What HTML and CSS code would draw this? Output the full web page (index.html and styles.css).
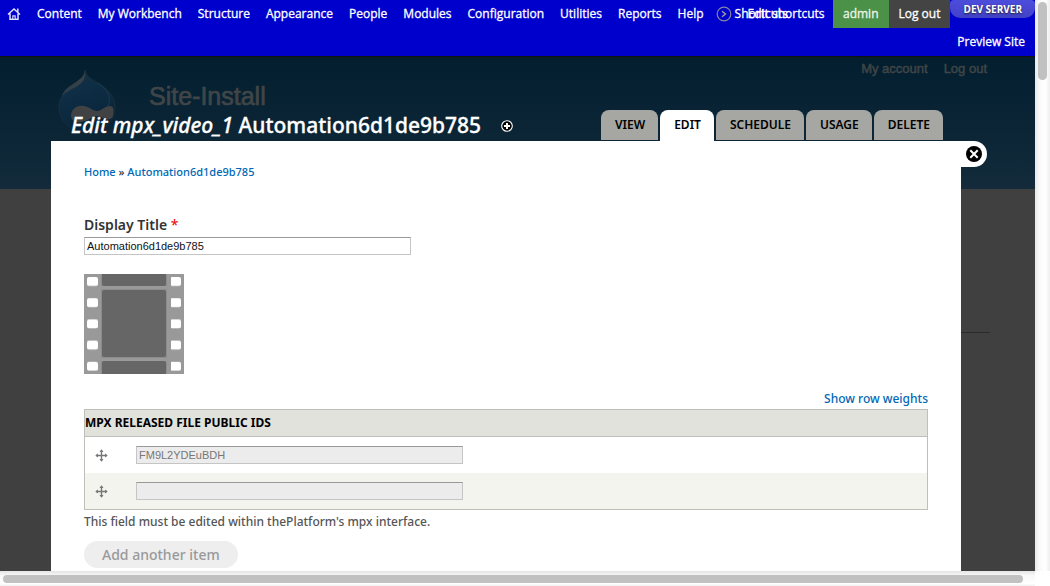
FILE: index.html
```html
<!DOCTYPE html>
<html lang="en">
<head>
<meta charset="utf-8">
<title>Edit mpx_video_1 Automation6d1de9b785 | Site-Install</title>
<link rel="stylesheet" href="styles.css">
</head>
<body>
<div class="screen">
  <nav class="toolbar" aria-label="Administration">
    <ul class="menu">
      <li><a href="#" class="home" aria-label="Home"><svg width="14" height="14" viewBox="0 0 14 14"><path d="M1 7.5 7 2l6 5.5M3 6.4v5.9h8V6.4M10.8 1.5v3.5" fill="none" stroke="#dfe1f7" stroke-width="1.5"/><path d="M5.3 8.3h3.4V13H5.3z" fill="#dfe1f7"/><path d="M6.4 9.6h1.2v2.2H6.4z" fill="#0000cd"/></svg></a></li>
      <li><a href="#">Content</a></li>
      <li><a href="#">My Workbench</a></li>
      <li><a href="#">Structure</a></li>
      <li><a href="#">Appearance</a></li>
      <li><a href="#">People</a></li>
      <li><a href="#">Modules</a></li>
      <li><a href="#">Configuration</a></li>
      <li><a href="#">Utilities</a></li>
      <li><a href="#">Reports</a></li>
      <li><a href="#">Help</a></li>
    </ul>
    <div class="shortcuts">
      <svg width="16" height="16" viewBox="0 0 16 16"><circle cx="8" cy="8" r="6.8" fill="none" stroke="#8585a5" stroke-width="1.2"/><path d="M6 5.3 9.5 8 6 10.7" fill="none" stroke="#a0a092" stroke-width="1.4"/></svg>
      <a href="#">Shortcuts</a>
      <a href="#" class="edit-shortcuts">Edit shortcuts</a>
    </div>
    <div class="account">
      <a href="#" class="user">admin</a>
      <a href="#" class="logout">Log out</a>
      <span class="environment">DEV SERVER</span>
    </div>
    <a href="#" class="preview">Preview Site</a>
  </nav>

  <div class="viewport">
    <div class="backdrop">
      <header class="site-header">
        <svg class="logo" width="60" height="64" viewBox="0 0 60 64">
          <defs>
            <linearGradient id="drop" x1="0" y1="0" x2="0.4" y2="1"><stop offset="0" stop-color="#1d3544"/><stop offset=".4" stop-color="#0e2e45"/><stop offset="1" stop-color="#08243a"/></linearGradient>
            <linearGradient id="shine" x1="1" y1="0" x2="0" y2="1"><stop offset="0" stop-color="#3c4348"/><stop offset="1" stop-color="#2c3d48"/></linearGradient>
          </defs>
          <path d="M27 1c2 9 8 9 16 15 8 6 14 12 14 22 0 15-12 25-28 25S1 52 1 38C1 27 9 20 17 15c6-4 9-6 10-14z" fill="url(#drop)" stroke="#1b2e3b"/>
          <path d="M4 27c2-7 8-10 14-14 4-3 8-5 9-11 1 8-3 12-9 16-6 3-10 5-14 9z" fill="url(#shine)"/>
          <path d="M39 14c10 5 15 14 11 23" fill="none" stroke="#1b3b50"/>
          <path d="M13 47c0-7 6-11 13-10 6 1 9 5 13 5s8-5 13-5c4 0 4 5 3 10-2 5-8 4-12 1-4-2-6-1-10 1-7 5-19 7-20-2z" fill="#404244"/>
        </svg>
        <span class="site-name">Site-Install</span>
        <div class="site-links"><a href="#">My account</a><a href="#">Log out</a></div>
      </header>
      <div class="site-body"><hr></div>
    </div>

    <div class="overlay">
      <header class="overlay-head">
        <h1><em>Edit mpx_video_1</em> Automation6d1de9b785</h1>
        <button class="add" aria-label="Add to shortcuts"><svg width="12" height="12" viewBox="0 0 12 12"><circle cx="6" cy="6" r="5.3" fill="#000" stroke="#fff" stroke-width="1.1"/><path d="M6 3v6M3 6h6" stroke="#fff" stroke-width="2"/></svg></button>
        <nav class="tabs" aria-label="Tabs">
          <a href="#">VIEW</a><a href="#" class="active">EDIT</a><a href="#">SCHEDULE</a><a href="#">USAGE</a><a href="#">DELETE</a>
        </nav>
      </header>
      <div class="overlay-main">
        <main class="panel">
          <div class="crumbs"><a href="#">Home</a> » <a href="#">Automation6d1de9b785</a></div>
          <label class="title-label" for="display-title">Display Title <span>*</span></label>
          <input class="text" id="display-title" value="Automation6d1de9b785">
          <svg class="film" width="100" height="100" viewBox="0 0 100 100">
            <defs><pattern id="holes" width="83" height="21.2" patternUnits="userSpaceOnUse" x="3" y="3"><rect width="11" height="9" rx="2" fill="#fff"/></pattern></defs>
            <path fill="#999" d="M0 0h100v100H0z"/>
            <path fill="#8c8c8c" d="M17 0h66v100H17z"/>
            <path fill="#999" d="M17 12h66v3H17zM17 84h66v3H17z"/>
            <path fill="#666" d="M18 0h64v10q0 2-2 2H20q-2 0-2-2zM20 16h60q2 0 2 2v63q0 2-2 2H20q-2 0-2-2V18q0-2 2-2zM20 87h60q2 0 2 2v11H18V89q0-2 2-2z"/>
            <path fill="url(#holes)" d="M3 3h94v94H3z"/>
          </svg>
          <a href="#" class="weights">Show row weights</a>
          <table>
            <thead><tr><th colspan="2">MPX RELEASED FILE PUBLIC IDS</th></tr></thead>
            <tbody>
              <tr>
                <td class="handle"><svg width="13" height="13" viewBox="0 0 13 13"><path d="M6.5 1v11M1 6.5h11" stroke="#777" stroke-width="1.4"/><path d="M4.5 3 6.5.3 8.5 3zM4.5 10l2 2.7 2-2.7zM3 4.5.3 6.5 3 8.5zM10 4.5l2.7 2-2.7 2z" fill="#777"/></svg></td>
                <td><input class="text" aria-label="Public ID 1" value="FM9L2YDEuBDH" disabled></td>
              </tr>
              <tr>
                <td class="handle"><svg width="13" height="13" viewBox="0 0 13 13"><path d="M6.5 1v11M1 6.5h11" stroke="#777" stroke-width="1.4"/><path d="M4.5 3 6.5.3 8.5 3zM4.5 10l2 2.7 2-2.7zM3 4.5.3 6.5 3 8.5zM10 4.5l2.7 2-2.7 2z" fill="#777"/></svg></td>
                <td><input class="text" aria-label="Public ID 2" disabled></td>
              </tr>
            </tbody>
          </table>
          <p class="hint">This field must be edited within thePlatform's mpx interface.</p>
          <button class="add-item" disabled>Add another item</button>
        </main>
        <button class="close" aria-label="Close overlay"><svg width="16" height="16" viewBox="0 0 16 16"><circle cx="8" cy="8" r="8" fill="#000"/><path d="m4.3 4.3 7.4 7.4m0-7.4-7.4 7.4" stroke="#fff" stroke-width="2"/></svg></button>
      </div>
    </div>
  </div>
</div>
<div class="scroll-v"><div class="thumb"></div></div>
<div class="scroll-h"><div class="thumb"></div></div>
</body>
</html>
```
FILE: styles.css
```css
* { box-sizing: border-box; }
body {
  margin: 0;
  height: 100vh;
  display: grid;
  grid-template: minmax(0, 1fr) 15px / minmax(0, 1fr) 15px;
  overflow: hidden;
  background: #fff;
  font: 500 12px/18px "Noto Sans", "Open Sans", sans-serif;
  color: #333;
}
a { color: #0068b5; text-decoration: none; }
button { border: 0; padding: 0; background: none; }
svg { display: block; }

.screen { display: flex; flex-direction: column; min-height: 0; overflow: hidden; }

.toolbar {
  display: flex;
  flex-wrap: wrap;
  flex: none;
  background: #0000cd;
  border-bottom: 1px solid #111;
  font: 12px/28px "Open Sans", sans-serif;
  -webkit-text-stroke: 0.3px currentColor;
}
.toolbar a { color: #fff; }
.menu { display: flex; margin: 0; padding: 0; list-style: none; }
.menu a { display: block; padding: 0 8px; }
.menu .home { padding: 7px 8px 7px 7px; }
.shortcuts { position: relative; display: flex; align-items: center; gap: 3px; margin-left: 4px; }
.edit-shortcuts { position: absolute; left: 32px; top: 0; white-space: nowrap; }
.account { display: flex; margin-left: auto; }
.account a { padding: 0 10px; }
.account .user { background: #4b9148; color: #eef5ee; }
.account .logout { background: #444; }
.environment {
  height: 18px;
  padding: 0 13px;
  border-radius: 4px 4px 10px 10px;
  background: linear-gradient(#4d4ddc, #4141c8);
  color: #fff;
  font: bold 10px/18px "Open Sans", sans-serif;
  text-shadow: 0 1px 2px #222;
  -webkit-text-stroke: 0;
}
.preview { margin-left: auto; padding-right: 10px; }

.viewport { flex: 1; min-height: 0; display: grid; grid-template: minmax(0, 1fr) / minmax(0, 1fr); }
.backdrop, .overlay { grid-area: 1 / 1; min-height: 0; }
.backdrop { background: #404040; }
.site-header {
  height: 132px;
  display: flex;
  align-items: flex-start;
  padding: 0 48px 0 58px;
  background: linear-gradient(#021e2f, #132b3b);
  color: #404547;
  font-family: "Liberation Sans", sans-serif;
}
.logo { margin-top: 12px; }
.site-name { margin: 23px 0 0 31px; font-size: 25px; font-weight: 400; line-height: 32px; -webkit-text-stroke: 0.7px currentColor; }
.site-links { display: flex; gap: 16px; margin-left: auto; padding-top: 3px; font-size: 13px; font-weight: 400; }
.site-links a { color: #404547; -webkit-text-stroke: 0.5px currentColor; }
.site-body { padding: 143px 45px 0 60px; }
.site-body hr { margin: 0; border: 0; border-top: 1px solid #2b2b2b; }

.overlay { display: flex; flex-direction: column; padding: 53px 48px 0 51px; }
.overlay-head { display: flex; align-items: flex-end; flex: none; height: 31px; padding: 0 44px 0 20px; }
.overlay h1 {
  margin: 0;
  font-size: 21px;
  font-weight: 500;
  line-height: 32px;
  color: #fff;
  white-space: nowrap;
  -webkit-text-stroke: 0.3px currentColor;
}
.add { align-self: center; margin-left: 20px; }
.tabs { display: flex; align-items: flex-start; gap: 2px; margin-left: auto; height: 31px; }
.tabs a {
  padding: 0 13px 0 14px;
  border-radius: 8px 8px 0 0;
  background: #a6a7a2;
  color: #000;
  font-size: 12px;
  font-weight: 600;
  line-height: 30px;
}
.tabs .active { height: 31px; background: #fff; }
.overlay-main { flex: 1; min-height: 0; display: flex; align-items: flex-start; }
.panel {
  flex: 1;
  align-self: stretch;
  display: flex;
  flex-direction: column;
  align-items: flex-start;
  padding: 22px 33px 0;
  background: #fff;
  overflow: hidden;
}
.close { flex: none; width: 26px; padding: 5px; border-radius: 0 13px 13px 0; background: #fff; }
.crumbs { font-size: 11px; }
.title-label { margin: 34px 0 2px; font-size: 14px; font-weight: 600; line-height: 20px; }
.title-label span { color: #e00; font-weight: 400; }
.text {
  display: block;
  width: 327px;
  height: 18px;
  margin: 0;
  padding: 0 2px;
  border: 1px solid #c5c5c5;
  border-top-color: #999;
  background: #fff;
  color: #111;
  font: 11px/16px "Liberation Sans", sans-serif;
}
.text:disabled { background: #ececec; color: #777; }
.film { flex: none; margin-top: 19px; }
.weights { align-self: flex-end; margin: 16px 0 1px; }
table { width: 100%; border: 1px solid #bebfb9; border-spacing: 0; }
th {
  height: 27px;
  padding: 0;
  border-bottom: 1px solid #bebfb9;
  background: #e1e2dc;
  color: #000;
  font-weight: 700;
  text-align: left;
}
td { height: 36px; padding: 0; }
tbody tr:nth-child(2) { background: #f3f4ee; }
.handle { width: 51px; padding-left: 10px; }
.hint { margin: 3px 0 10px; color: #555; }
.add-item {
  flex: none;
  padding: 0 18px;
  border-radius: 14px;
  background: #eee;
  color: #999;
  font: 500 14px/27px "Noto Sans", sans-serif;
}

.scroll-v { padding: 2px 3px; background: linear-gradient(90deg, #e9e9e9, #fafafa 30%, #fff 70%, #eee); }
.scroll-v .thumb { width: 9px; height: 78px; border-radius: 5px; background: #c1c1c1; }
.scroll-h { padding: 4px 12px 0 3px; background: linear-gradient(#e4e4e4, #f8f8f8 30%, #fff 85%, #eee); }
.scroll-h .thumb { height: 8px; border-radius: 4px; background: #c1c1c1; }
```
